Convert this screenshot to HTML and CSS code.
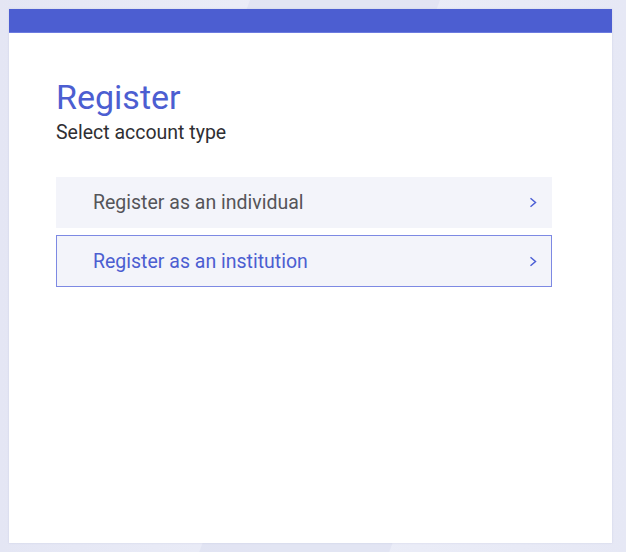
FILE: index.html
```html
<!DOCTYPE html>
<html>
<head>
<meta charset="utf-8">
<link rel="stylesheet" href="styles.css">
</head>
<body>
<div class="bg-shape shape-a"></div>
<div class="bg-shape shape-b"></div>
<main class="card">
  <div class="card-bar"></div>
  <div class="card-body">
    <h1 class="title">Register</h1>
    <p class="subtitle">Select account type</p>
    <div class="options">
      <a class="option" href="#">
        <span class="option-label">Register as an individual</span>
        <svg class="chevron" width="8" height="11" viewBox="0 0 8 11"><path d="M1.5 1.2 L6.5 5.5 L1.5 9.8" fill="none" stroke="#4c5fd5" stroke-width="1.5"/></svg>
      </a>
      <a class="option option-active" href="#">
        <span class="option-label">Register as an institution</span>
        <svg class="chevron" width="8" height="11" viewBox="0 0 8 11"><path d="M1.5 1.2 L6.5 5.5 L1.5 9.8" fill="none" stroke="#4c5fd5" stroke-width="1.5"/></svg>
      </a>
    </div>
  </div>
</main>
</body>
</html>
```
FILE: styles.css
```css
html, body {
  margin: 0;
  padding: 0;
}
body {
  width: 626px;
  height: 552px;
  overflow: hidden;
  position: relative;
  background: linear-gradient(90deg, #e4e6f4 0%, #eceef8 50%, #e6e8f5 100%);
  font-family: Roboto, "Liberation Sans", sans-serif;
  padding: 9px 0 0 9px;
  box-sizing: border-box;
}
.bg-shape {
  position: absolute;
  background: #dcdff0;
  opacity: 0.6;
}
.shape-a {
  left: 250px;
  top: -40px;
  width: 190px;
  height: 80px;
  transform: skewX(-20deg);
}
.shape-b {
  left: 200px;
  top: 530px;
  width: 190px;
  height: 40px;
  transform: skewX(-20deg);
}
.card {
  position: relative;
  width: 603px;
  height: 534px;
  background: #fff;
  box-shadow: 0 0 2px rgba(80, 90, 160, 0.15);
  display: flex;
  flex-direction: column;
}
.card-bar {
  height: 23px;
  background: #4c5ed1;
  border-bottom: 1px solid #6c7be0;
}
.card-body {
  padding: 44px 60px 0 47px;
}
.title {
  margin: 0;
  font-size: 34px;
  font-weight: 400;
  line-height: 40px;
  color: #4c5ed1;
}
.subtitle {
  margin: 4px 0 0;
  font-size: 19.5px;
  line-height: 24px;
  color: #2f2f33;
}
.options {
  margin-top: 32px;
  display: flex;
  flex-direction: column;
  gap: 7px;
  width: 496px;
}
.option {
  display: flex;
  align-items: center;
  justify-content: space-between;
  height: 51px;
  box-sizing: border-box;
  padding: 0 14px 0 36px;
  background: #f3f4fa;
  border: 1px solid transparent;
  text-decoration: none;
}
.option-label {
  font-size: 19.5px;
  color: #555559;
}
.option-active {
  border-color: #7d89e3;
  height: 52px;
}
.option-active .option-label {
  color: #4c5ed1;
}
.chevron {
  display: block;
}
```
